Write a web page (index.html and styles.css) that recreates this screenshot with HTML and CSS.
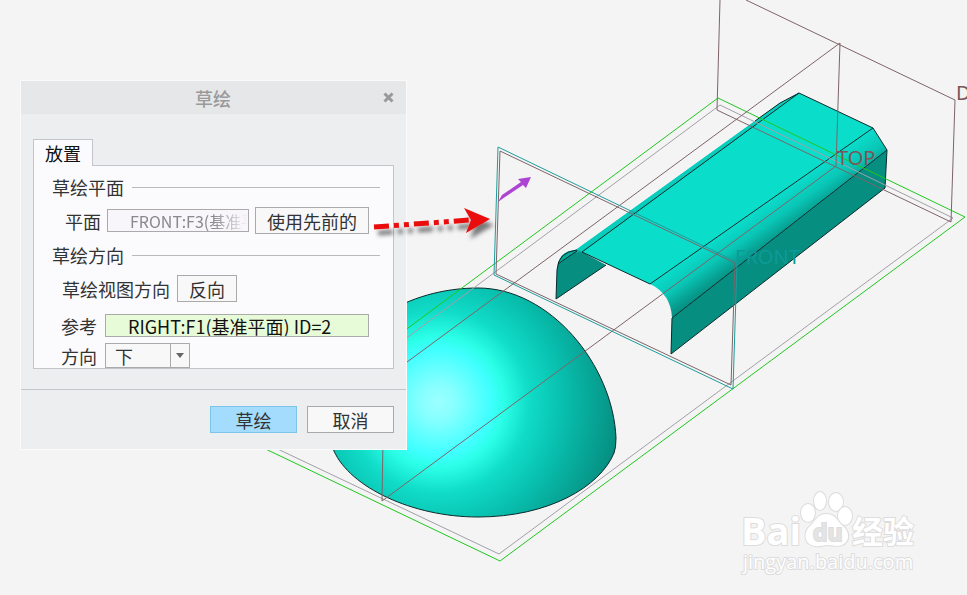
FILE: index.html
```
<!DOCTYPE html>
<html lang="zh-CN">
<head>
  <meta charset="UTF-8">
  <title>草绘</title>
  <link rel="stylesheet" href="styles.css">
</head>
<body>

<div class="workspace">

  <svg class="scene" viewBox="0 0 967 595" aria-hidden="true">
    <defs>
      <radialGradient id="dome" gradientUnits="userSpaceOnUse" cx="438" cy="402" r="182">
        <stop offset="0" stop-color="#9cffff"/>
        <stop offset="0.1" stop-color="#86ffff"/>
        <stop offset="0.29" stop-color="#40ffff"/>
        <stop offset="0.36" stop-color="#2cffe8"/>
        <stop offset="0.5" stop-color="#10dcc8"/>
        <stop offset="0.7" stop-color="#08bdac"/>
        <stop offset="0.86" stop-color="#07a495"/>
        <stop offset="1" stop-color="#068f82"/>
      </radialGradient>
      <linearGradient id="fillet" gradientUnits="userSpaceOnUse" x1="650" y1="284" x2="673" y2="317">
        <stop offset="0" stop-color="#0adccb"/>
        <stop offset="0.45" stop-color="#09c6b6"/>
        <stop offset="0.8" stop-color="#079f91"/>
        <stop offset="1" stop-color="#068e81"/>
      </linearGradient>
      <filter id="shadow" x="-20%" y="-60%" width="140%" height="260%">
        <feDropShadow dx="4" dy="6" stdDeviation="2" flood-color="#000" flood-opacity="0.5"/>
      </filter>
    </defs>

    <!-- dome -->
    <path class="edge" fill="url(#dome)" d="M334 451C350 487 412 517 478 517C548 517 600 487 614 453Q616 448 616 438C613 365 550 288 478 288C410 288 340 325 326 400Q325 430 334 451Z"/>

    <!-- channel -->
    <path fill="#0adecb" d="M577 249L780 103L799 93L873 128L650 284L582 252Z"/>
    <path class="soft" d="M577 249L780 103L799 93L582 252L572 251Z"/>
    <path class="side" d="M556 299L557 270Q558 252 577 250L582 252L606 265Z"/>
    <path fill="#07a99a" d="M558 265Q560 250 577 250L582 252L575 253Z"/>
    <path fill="url(#fillet)" d="M650 284L873 128L887 150L672 318Q671 294 650 284Z"/>
    <path class="side" d="M672 318L887 150L885 188L671 354Z"/>
    <path class="edge" d="M606 265L556 299L557 270Q558 252 577 250M558 264L577 251M650 284L582 252L799 93L780 103L755 121M799 93L873 128L650 284M873 128L887 150L885 188L671 354L672 318L887 150"/>

    <!-- datum planes -->
    <path class="grey" d="M720 105L953 218L499 554L265 443Z"/>
    <path class="green" d="M718 98L965 217L500 561L253 443Z"/>
    <path class="brown" d="M720 0L717 110L951 222L955 100L746 0"/>
    <path class="brown" d="M840 43L384 379L382 501L836 166Z"/>
    <path class="teal" d="M498 147L737 262L733 389L494 275Z"/>
    <path class="brown" d="M500 151L735 263L731 385L496 274Z"/>
    <text class="tag" x="837" y="165">TOP</text>
    <text class="tag tag-front" x="735" y="264">FRONT</text>
    <text class="tag" x="956" y="100">D</text>

    <path fill="#ad44d4" d="M498 202L502 195L521 182L518 179L531 177L526 188L523 185L505 197Z"/>

    <!-- watermark -->
    <g class="mark">
      <text class="mark-bai" x="741" y="545">Bai</text>
      <ellipse cx="808" cy="513" rx="7" ry="9"/>
      <ellipse cx="820" cy="501" rx="6" ry="9"/>
      <ellipse cx="836" cy="502" rx="7" ry="9"/>
      <ellipse cx="845" cy="516" rx="7" ry="9"/>
      <path d="M826 514C817 514 816 521 810 526C803 532 804 545 815 546C821 547 822 545 827 545C833 545 837 547 842 545C850 542 850 532 843 526C837 521 836 514 826 514Z"/>
      <text class="mark-du" x="813" y="541">du</text>
      <text class="mark-cn" x="852" y="543">经验</text>
      <text class="mark-url" x="743" y="569">jingyan.baidu.com</text>
    </g>
  </svg>

  <form class="dialog">
    <header class="titlebar">
      <h1>草绘</h1>
      <button type="button" class="close" aria-label="关闭">
        <svg width="11" height="11" viewBox="0 0 11 11"><path d="M1.500 1.500L9.500 9.500M9.500 1.500L1.500 9.500"/></svg>
      </button>
    </header>

    <div class="body">
      <button type="button" class="tab">放置</button>
      <div class="panel">
        <h2>草绘平面</h2>
        <div class="row row-plane">
          <label for="plane">平面</label>
          <span class="field field-faded"><input type="text" id="plane" value="FRONT:F3(基准平面)"></span>
          <button type="button">使用先前的</button>
        </div>

        <h2>草绘方向</h2>
        <div class="row row-flip">
          <span>草绘视图方向</span>
          <button type="button">反向</button>
        </div>
        <div class="row row-ref">
          <label for="ref">参考</label>
          <span class="field field-active"><input type="text" id="ref" value="RIGHT:F1(基准平面) ID=2"></span>
        </div>
        <div class="row row-dir">
          <label for="dir">方向</label>
          <span class="select">
            <select id="dir">
              <option>下</option>
              <option>上</option>
              <option>左</option>
              <option>右</option>
            </select>
          </span>
        </div>
      </div>
    </div>

    <footer class="actions">
      <button type="submit" class="primary">草绘</button>
      <button type="button">取消</button>
    </footer>
  </form>

  <svg class="scene callout" viewBox="0 0 967 595" aria-hidden="true">
    <g filter="url(#shadow)" fill="#ea0a0a">
      <path class="dashes" d="M374 227L470 220"/>
      <path d="M464 208L490 219L466 233L471 220Z"/>
    </g>
  </svg>

</div>

</body>
</html>
```
FILE: styles.css
```
* {
  box-sizing: border-box;
}

body {
  margin: 0;
  background: #f4f4f4;
  color: #333;
  font-family: "Noto Sans CJK SC", sans-serif;
  font-size: 18px;
  line-height: 20px;
}

.workspace {
  display: grid;
  overflow: hidden;
}

.workspace > * {
  grid-area: 1 / 1;
}

/* 3D view */
.scene {
  display: block;
  width: 100%;
}

.callout {
  z-index: 2;
  pointer-events: none;
}

.scene path {
  stroke-linejoin: round;
}

.edge {
  stroke: #0b2a2a;
}

path.edge:not([fill]) {
  fill: none;
}

.side {
  fill: #068e81;
}

.soft {
  fill: #09cdbc;
}

.grey,
.green,
.brown,
.teal {
  fill: none;
}

.grey {
  stroke: #a39fa9;
}

.green {
  stroke: #1fc81f;
}

.brown {
  stroke: #7d6468;
}

.teal {
  stroke: #1c9c9c;
}

.dashes {
  stroke: #ea0a0a;
  stroke-width: 5;
  stroke-dasharray: 15 5 5 5 5 5;
}

.tag {
  fill: #7c5558;
  font-family: "Noto Sans", sans-serif;
  font-size: 20px;
}

.tag-front {
  fill: #0d9a98;
}

.mark {
  fill: #fff;
  stroke: #dcdcdc;
  stroke-width: 2;
  paint-order: stroke;
  font-family: "Open Sans", sans-serif;
}

.mark-bai {
  font-size: 38px;
  font-weight: bold;
}

.mark-du {
  fill: #e4e4e4;
  font-size: 23px;
  font-weight: bold;
}

.mark-cn {
  font-family: "Noto Sans CJK SC", sans-serif;
  font-size: 31px;
  font-weight: bold;
}

.mark-url {
  font-size: 20px;
}

/* dialog */
.dialog {
  justify-self: start;
  align-self: start;
  z-index: 1;
  width: 387px;
  margin: 80px 0 0 20px;
  border: 1px solid #fafafa;
  background: #eceef0;
}

.titlebar {
  display: flex;
  align-items: center;
  height: 33px;
  padding: 0 12px;
  background: #e6e7e9;
}

.titlebar h1 {
  flex: 1;
  margin: 0;
  padding-left: 10px;
  color: #9a9a9a;
  font-size: 18px;
  font-weight: 500;
  text-align: center;
}

button {
  height: 27px;
  padding: 0;
  border: 1px solid #aaa;
  background: #f8f8f9;
  color: #333;
  font: inherit;
}

.titlebar .close {
  display: flex;
  height: 11px;
  border: 0;
  background: none;
}

.close path {
  fill: none;
  stroke: #999;
  stroke-width: 3;
}

.body {
  padding: 25px 12px 20px;
}

.tab {
  display: block;
  position: relative;
  width: 60px;
  height: 27px;
  margin-bottom: -1px;
  border-color: #c4c5c8;
  border-bottom: 0;
  background: #fbfbfd;
  color: #111;
}

.panel {
  padding: 11px 13px 0 18px;
  border: 1px solid #c4c5c8;
  background: #fbfbfd;
}

.panel h2 {
  display: flex;
  align-items: center;
  gap: 8px;
  margin: 0;
  font-size: 18px;
  font-weight: normal;
}

.panel h2::after {
  content: "";
  flex: 1;
  height: 1px;
  background: #b9b9bc;
}

.row {
  display: flex;
  align-items: center;
}

.row-plane {
  gap: 6px;
  padding: 10px 11px 11px 13px;
}

.row-plane button {
  width: 114px;
}

.row-flip {
  gap: 7px;
  padding: 10px 11px 12px 10px;
}

.row-flip button {
  width: 60px;
}

.row-ref,
.row-dir {
  gap: 8px;
  padding: 0 11px 0 9px;
}

.row-ref {
  margin-bottom: 6px;
}

.field {
  flex: 1;
  height: 23px;
  border: 1px solid #aaa;
  background: #f8f6fb;
}

.field input {
  display: block;
  width: 100%;
  height: 21px;
  padding: 0 0 0 22px;
  border: 0;
  background: none;
  color: #111;
  font: inherit;
}

.field-faded input {
  color: #8a888c;
  font-size: 16px;
  -webkit-mask-image: linear-gradient(to right, #000 75%, transparent 100%);
  mask-image: linear-gradient(to right, #000 75%, transparent 100%);
}

.field-active {
  background: #e8fbd9;
}

.select {
  position: relative;
  width: 85px;
}

.select select {
  display: block;
  width: 100%;
  height: 25px;
  padding: 0 0 0 9px;
  border: 1px solid #aaa;
  border-radius: 0;
  background: #f8f8f9;
  color: #333;
  font: inherit;
  appearance: none;
}

.select::before {
  content: "";
  position: absolute;
  top: 0;
  right: 19px;
  width: 1px;
  height: 100%;
  background: #aaa;
}

.select::after {
  content: "";
  position: absolute;
  top: 10px;
  right: 6px;
  border: 4px solid transparent;
  border-top: 5px solid #666;
  border-bottom: 0;
  pointer-events: none;
}

.actions {
  display: flex;
  justify-content: flex-end;
  gap: 10px;
  padding: 16px 12px;
  border-top: 1px solid #c4c5c8;
}

.actions button {
  width: 87px;
}

.actions .primary {
  border-color: #7cc4ea;
  background: #a3dcfc;
}
```
